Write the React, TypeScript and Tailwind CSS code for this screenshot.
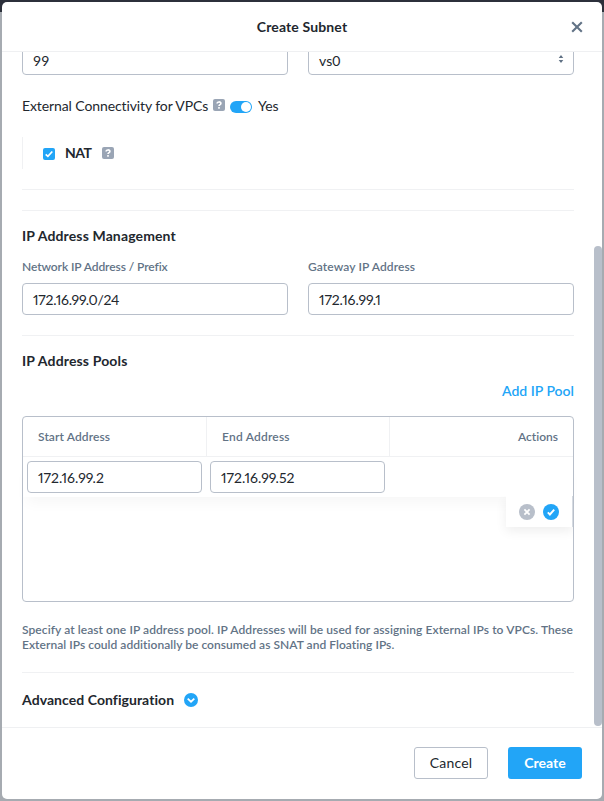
import React from "react";

const field = "flex h-8 items-center rounded border border-[#b8bfca] bg-white px-2.5 text-[14px] text-[#22272e]";
const label = "text-[12px] font-semibold leading-4 text-[#627386]";
const heading = "text-[14px] font-bold leading-5 text-[#22272e]";

function Help() {
  return (
    <span className="flex size-3 items-center justify-center rounded-[2px] bg-[#9aa5b5]">
      <svg viewBox="0 0 12 12" className="size-3" fill="none" stroke="#fff" strokeWidth="1.6">
        <path d="M4.1 4.6C4.1 2.4 7.9 2.4 7.9 4.4C7.9 5.7 6 5.5 6 7.1" />
        <path d="M6 8.1v1.6" />
      </svg>
    </span>
  );
}

function Divider() {
  return <div className="h-px bg-[#f0f1f3]" />;
}

export default function App() {
  return (
    <div
      className="h-[801px] w-[604px] bg-[linear-gradient(#2c303b_0_12px,#a6abb1_12px)] p-0.5 text-[#22272e] [font-variant-ligatures:none]"
      style={{ fontFamily: 'Lato, "Noto Sans", sans-serif' }}
    >
      <div className="relative flex h-[797px] flex-col overflow-hidden rounded-[5px] bg-white">
        <header className="relative flex h-[50px] shrink-0 items-center justify-center border-b border-[#eff0f2]">
          <h1 className="text-[14px] font-bold leading-5 tracking-[0.14px]">Create Subnet</h1>
          <svg viewBox="0 0 12 12" className="absolute right-[19px] top-[19px] size-3" stroke="#627386" strokeWidth="2.1">
            <path d="M1.2 1.2l9.6 9.6M10.8 1.2l-9.6 9.6" />
          </svg>
        </header>

        <main className="flex h-[675px] shrink-0 flex-col overflow-hidden px-5 pr-7">
          <div className="-mt-[9px] grid shrink-0 grid-cols-2 gap-5">
            <div className={field}><span className="pt-0.5 tracking-[0.2px]">99</span></div>
            <div className={`${field} justify-between`}>
              <span className="pt-0.5 tracking-[0.1px]">vs0</span>
              <svg viewBox="0 0 6 8" className="-mr-px h-2 w-1.5" fill="#627386">
                <path d="M3 0l2.3 3H.7zM3 8l2.3-3H.7z" />
              </svg>
            </div>
          </div>

          <div className="mt-[21px] flex h-5 shrink-0 items-center">
            <span className="-mt-0.5 w-[191px] whitespace-nowrap text-[14px] tracking-[-0.1px]">External Connectivity for VPCs</span>
            <span className="-mt-0.5"><Help /></span>
            <span className="ml-[5px] mt-0.5 flex h-3 w-[22px] justify-end rounded-full bg-[#22a5f7] p-px">
              <span className="size-2.5 rounded-full bg-white" />
            </span>
            <span className="-mt-0.5 ml-1.5 text-[14px]">Yes</span>
          </div>

          <div className="mt-[21px] flex h-8 shrink-0 items-center border-l border-[#f0f1f3] pl-5">
            <span className="mt-0.5 size-3 rounded-[2px] bg-[#22a5f7]">
              <svg viewBox="0 0 12 12" className="size-3" fill="none" stroke="#fff" strokeWidth="1.7">
                <path d="M2.7 6.3l2.2 2.1 4.4-4.9" />
              </svg>
            </span>
            <span className="-mt-0.5 ml-2.5 w-[37px] text-[14px] font-bold tracking-[-0.5px]">NAT</span>
            <Help />
          </div>

          <div className="mt-5 shrink-0"><Divider /></div>
          <div className="mt-5 shrink-0"><Divider /></div>

          <h2 className={`${heading} mt-[15px] tracking-[0.13px]`}>IP Address Management</h2>
          <div className="mt-[13px] grid shrink-0 grid-cols-2 gap-5">
            <div>
              <div className={`${label} tracking-[-0.09px]`}>Network IP Address / Prefix</div>
              <div className={`${field} mt-2`}><span className="pt-px tracking-[-0.22px] proportional-nums">172.16.99.0/24</span></div>
            </div>
            <div>
              <div className={`${label} tracking-[0.1px]`}>Gateway IP Address</div>
              <div className={`${field} mt-2`}><span className="pt-px tracking-[-0.1px] proportional-nums">172.16.99.1</span></div>
            </div>
          </div>

          <div className="mt-5 shrink-0"><Divider /></div>
          <h2 className={`${heading} mt-[15px] tracking-[0.15px]`}>IP Address Pools</h2>
          <div className="mt-2.5 text-right text-[14px] font-semibold leading-5 text-[#22a5f7]">Add IP Pool</div>

          <section className="mt-[15px] h-[186px] shrink-0 rounded border border-[#b8bfca]">
            <div className="flex h-10 border-b border-[#f0f1f3]">
              <div className={`${label} flex w-[184px] items-center border-r border-[#f0f1f3] pl-[15px] tracking-[0.1px]`}>Start Address</div>
              <div className={`${label} flex w-[183px] items-center border-r border-[#f0f1f3] pl-[15px] tracking-[0.2px]`}>End Address</div>
              <div className={`${label} flex flex-1 items-center justify-end pr-[15px]`}>Actions</div>
            </div>
            <div className="relative flex h-10 gap-2 px-1 pt-1 shadow-[0_10px_14px_-4px_rgba(0,0,0,0.035)]">
              <div className={`${field} w-[175px]`}><span className="proportional-nums">172.16.99.2</span></div>
              <div className={`${field} w-[175px]`}><span className="proportional-nums">172.16.99.52</span></div>
              <div className="absolute right-0 top-[39px] flex h-[31px] w-[67px] items-center justify-center gap-2 border-r border-[#d5dae1] bg-white shadow-[0_4px_12px_rgba(0,0,0,0.07)] [clip-path:inset(0_0_-20px_-12px)]">
                <svg viewBox="0 0 16 16" className="size-4" fill="none" strokeWidth="1.8">
                  <circle cx="8" cy="8" r="8" fill="#b8bfca" />
                  <path d="M5.4 5.4l5.2 5.2M10.6 5.4l-5.2 5.2" stroke="#fff" />
                </svg>
                <svg viewBox="0 0 16 16" className="size-4" fill="none" strokeWidth="1.9">
                  <circle cx="8" cy="8" r="8" fill="#22a5f7" />
                  <path d="M4.8 8.4l2.1 2.1 4.3-4.8" stroke="#fff" />
                </svg>
              </div>
            </div>
          </section>

          <p className="mt-5 whitespace-nowrap text-[12px] font-semibold leading-[15px] text-[#627386]">
            <span className="block tracking-[0.08px]">Specify at least one IP address pool. IP Addresses will be used for assigning External IPs to VPCs. These</span>
            <span className="block tracking-[0.04px]">External IPs could additionally be consumed as SNAT and Floating IPs.</span>
          </p>

          <div className="mt-5 shrink-0"><Divider /></div>
          <div className="mt-[17px] flex h-5 items-center">
            <h2 className={`${heading} w-[162px] whitespace-nowrap tracking-[0.06px]`}>Advanced Configuration</h2>
            <svg viewBox="0 0 14 14" className="size-3.5" fill="none">
              <circle cx="7" cy="7" r="7" fill="#22a5f7" />
              <path d="M3.7 5.7L7 8.7l3.3-3" stroke="#fff" strokeWidth="1.8" />
            </svg>
          </div>
        </main>

        <footer className="flex flex-1 items-start justify-end gap-5 border-t border-[#eff0f2] pr-5 pt-[19px]">
          <button className="h-8 w-[74px] rounded-[3px] border border-[#b8bfca] pb-px text-[14px] tracking-[0.2px]">Cancel</button>
          <button className="h-8 w-[74px] rounded-[3px] bg-[#22a5f7] pb-px text-[14px] font-bold text-white">Create</button>
        </footer>

        <div className="absolute right-0 top-[244px] h-[480px] w-2 rounded-full bg-[#b8bfca]" />
      </div>
    </div>
  );
}
